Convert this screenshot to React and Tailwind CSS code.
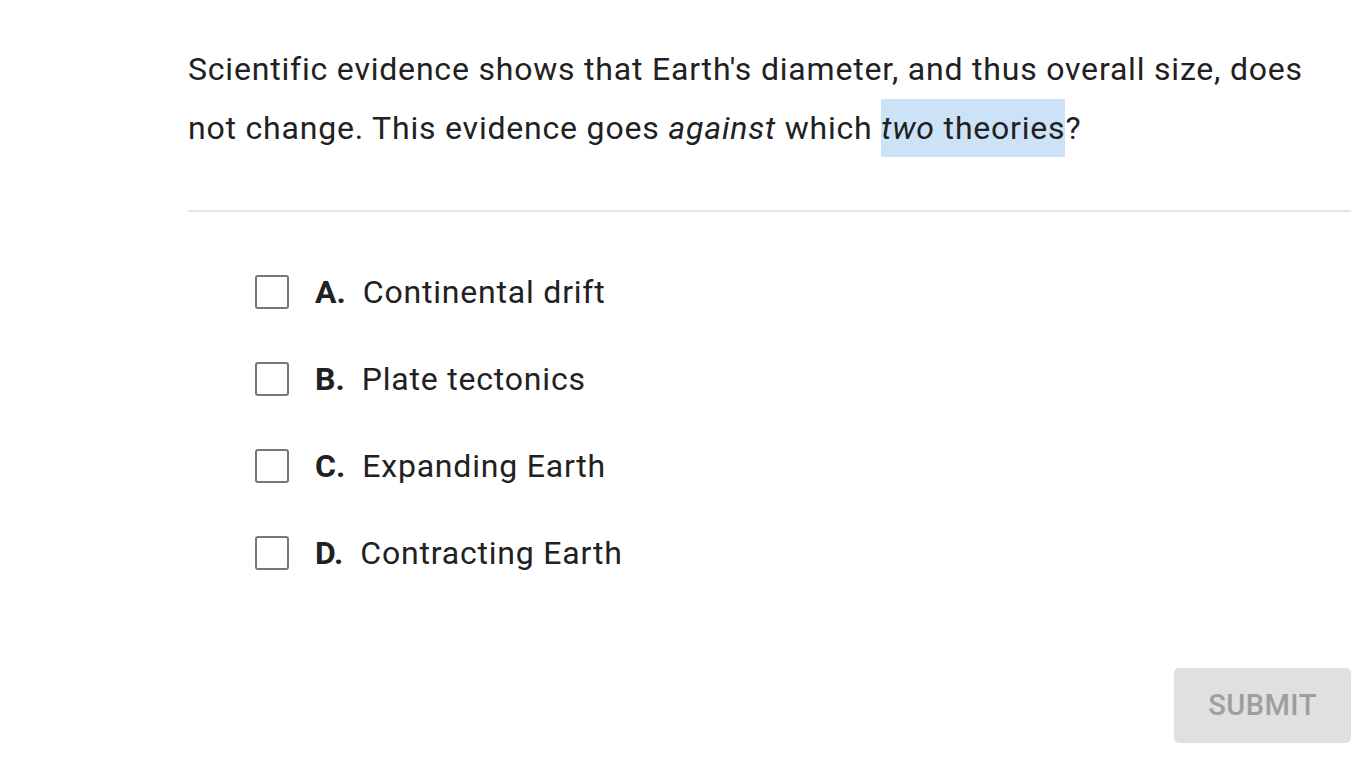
import React from "react";

const options = [
  { letter: "A.", text: "Continental drift" },
  { letter: "B.", text: "Plate tectonics" },
  { letter: "C.", text: "Expanding Earth" },
  { letter: "D.", text: "Contracting Earth" },
];

const App = () => {
  return (
    <div className="min-h-screen bg-white font-['Roboto',sans-serif] text-[#212121]">
      <div className="pl-[188px] pr-[15px] pt-[40px]">
        <p className="text-[32px] leading-[59px] tracking-[0.8px]">
          Scientific evidence shows that Earth's diameter, and thus overall size, does not change. This evidence goes{" "}
          <em>against</em> which{" "}
          <span className="bg-[#cce3f7] py-[10px]">
            <em>two</em> theories
          </span>
          ?
        </p>
        <div className="mt-[52px] h-[2px] bg-[#e4e4e4]" />
        <div className="flex flex-col gap-[53px] pl-[67px] pt-[63px]">
          {options.map((opt) => (
            <label key={opt.letter} className="flex h-[34px] items-center">
              <span className="h-[34px] w-[34px] shrink-0 rounded-[3px] border-2 border-[#777777] bg-white" />
              <span className="ml-[26px] mr-[17px] text-[32px] font-bold">{opt.letter}</span>
              <span className="text-[32px] tracking-[0.8px]">{opt.text}</span>
            </label>
          ))}
        </div>
        <div className="mt-[98px] flex justify-end">
          <button className="h-[75px] w-[177px] rounded-[5px] bg-[#e0e0e0] text-[29px] font-medium tracking-[0.5px] text-[#9e9e9e]">
            SUBMIT
          </button>
        </div>
      </div>
    </div>
  );
};

export default App;
